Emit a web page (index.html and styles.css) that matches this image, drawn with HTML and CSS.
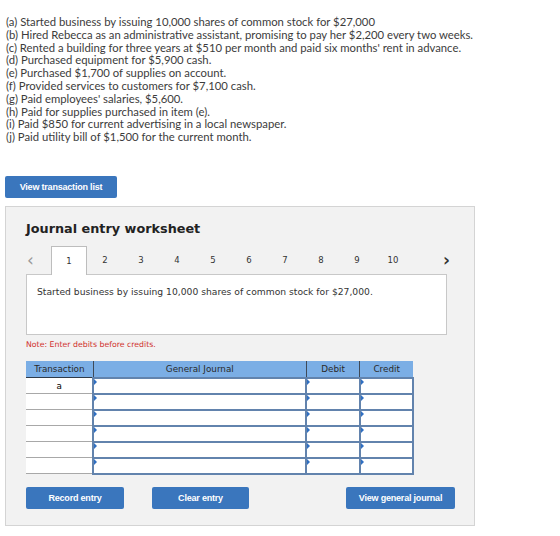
FILE: index.html
```html
<html>
  <head>
    <meta name="viewport" content="width=device-width, initial-scale=1.0">
    <link rel="stylesheet" href="styles.css">
  </head>
  <body>
    <div class="problem">
      <div>(a) Started business by issuing 10,000 shares of common stock for $27,000</div>
      <div>(b) Hired Rebecca as an administrative assistant, promising to pay her $2,200 every two weeks.</div>
      <div>(c) Rented a building for three years at $510 per month and paid six months' rent in advance.</div>
      <div>(d) Purchased equipment for $5,900 cash.</div>
      <div>(e) Purchased $1,700 of supplies on account.</div>
      <div>(f) Provided services to customers for $7,100 cash.</div>
      <div>(g) Paid employees' salaries, $5,600.</div>
      <div>(h) Paid for supplies purchased in item (e).</div>
      <div>(i) Paid $850 for current advertising in a local newspaper.</div>
      <div>(j) Paid utility bill of $1,500 for the current month.</div>
    </div>

    <div class="listWrapper">
      <button class="btn btnList">View transaction list</button>
    </div>

    <div class="worksheet">
      <h2 class="title">Journal entry worksheet</h2>

      <div class="tabs">
        <span class="arrow prev">&lsaquo;</span>
        <span class="tab active">1</span>
        <span class="tab">2</span>
        <span class="tab">3</span>
        <span class="tab">4</span>
        <span class="tab">5</span>
        <span class="tab">6</span>
        <span class="tab">7</span>
        <span class="tab">8</span>
        <span class="tab">9</span>
        <span class="tab">10</span>
        <span class="arrow next">&rsaquo;</span>
      </div>

      <div class="description">
        Started business by issuing 10,000 shares of common stock for $27,000.
      </div>

      <div class="note">Note: Enter debits before credits.</div>

      <table class="journal">
        <thead>
          <tr>
            <th class="colTrans">Transaction</th>
            <th class="colAccount">General Journal</th>
            <th class="colAmt">Debit</th>
            <th class="colAmt">Credit</th>
          </tr>
        </thead>
        <tbody>
          <tr><td class="trans">a</td><td class="cell"></td><td class="cell"></td><td class="cell"></td></tr>
          <tr><td class="trans"></td><td class="cell"></td><td class="cell"></td><td class="cell"></td></tr>
          <tr><td class="trans"></td><td class="cell"></td><td class="cell"></td><td class="cell"></td></tr>
          <tr><td class="trans"></td><td class="cell"></td><td class="cell"></td><td class="cell"></td></tr>
          <tr><td class="trans"></td><td class="cell"></td><td class="cell"></td><td class="cell"></td></tr>
          <tr><td class="trans"></td><td class="cell"></td><td class="cell"></td><td class="cell"></td></tr>
        </tbody>
      </table>

      <div class="actions">
        <button class="btn btnRecord">Record entry</button>
        <button class="btn btnClear">Clear entry</button>
        <button class="btn btnJournal">View general journal</button>
      </div>
    </div>
  </body>
</html>
```

FILE: styles.css
```css
body {
  margin: 0;
  background-color: #fff;
  font-family: Lato, sans-serif;
}
.problem {
  padding: 16px 0 0 6px;
  font-size: 11.3px;
  line-height: 12.8px;
  color: #3c3c3c;
}
.listWrapper {
  padding: 32px 0 0 5px;
}
.btn {
  height: 22px;
  border: none;
  border-radius: 2px;
  background-color: #3a76bd;
  color: #fff;
  font-family: "Liberation Sans", Arial, sans-serif;
  font-weight: bold;
  font-size: 9px;
  letter-spacing: -0.2px;
  padding: 0;
}
.btnList {
  width: 112px;
}
.worksheet {
  margin: 8px 0 0 5px;
  width: 448px;
  height: 318px;
  padding: 0 0 0 20px;
  background-color: #f2f2f2;
  border: 1px solid #d4d4d4;
  font-family: "DejaVu Sans", sans-serif;
  color: #333;
}
.title {
  margin: 14px 0 0 0;
  font-size: 12.8px;
  font-weight: bold;
  color: #222;
  line-height: 16px;
}
.tabs {
  display: flex;
  align-items: center;
  height: 28px;
  margin-top: 9px;
}
.arrow {
  width: 25px;
  box-sizing: border-box;
  font-size: 17px;
  line-height: 28px;
}
.prev {
  color: #999;
  padding-left: 1px;
}
.next {
  margin-left: 32px;
  color: #333;
  font-weight: bold;
}
.tab {
  width: 36px;
  height: 28px;
  line-height: 28px;
  text-align: center;
  font-size: 8.5px;
  box-sizing: border-box;
}
.tab.active {
  background-color: #fff;
  border: 1px solid #bdbdbd;
  border-bottom: none;
  height: 29px;
  margin-bottom: -1px;
  position: relative;
}
.description {
  width: 399px;
  height: 48px;
  padding: 11px 10px 0 10px;
  background-color: #fff;
  border: 1px solid #c8c8c8;
  font-size: 9.2px;
  line-height: 12px;
}
.note {
  margin-top: 5px;
  font-size: 7.8px;
  line-height: 10px;
  color: #d0312d;
}
.journal {
  margin-top: 11px;
  border-collapse: collapse;
  width: 388px;
  font-size: 8.8px;
}
.journal tr {
  height: 16px;
}
.journal th {
  height: 17px;
  padding: 0;
  background-color: #7baee5;
  color: #2a2a2a;
  font-weight: normal;
  border-bottom: 1px solid #2f3a48;
  border-left: 1px solid #3f4a58;
}
.journal th:first-child {
  border-left: none;
}
.colTrans {
  width: 67px;
}
.colAccount {
  width: 215px;
}
.colAmt {
  width: 53px;
}
.journal td {
  height: 14px;
  padding: 0;
  background-color: #fff;
}
.trans {
  text-align: center;
  border-bottom: 1px solid #a8a8a8;
  border-right: 1px solid #4a5664;
}
.cell {
  position: relative;
  border: 2px solid #6283ad;
}
/* little marker in the corner of each entry box */
.cell::before {
  content: "";
  position: absolute;
  top: 0;
  left: 0;
  border-top: 3px solid transparent;
  border-bottom: 3px solid transparent;
  border-left: 3px solid #2f6fc2;
}
.actions {
  display: flex;
  margin-top: 12px;
  padding-right: 19px;
}
.btnRecord {
  width: 98px;
}
.btnClear {
  width: 97px;
  margin-left: 28px;
}
.btnJournal {
  width: 109px;
  margin-left: auto;
}
```
